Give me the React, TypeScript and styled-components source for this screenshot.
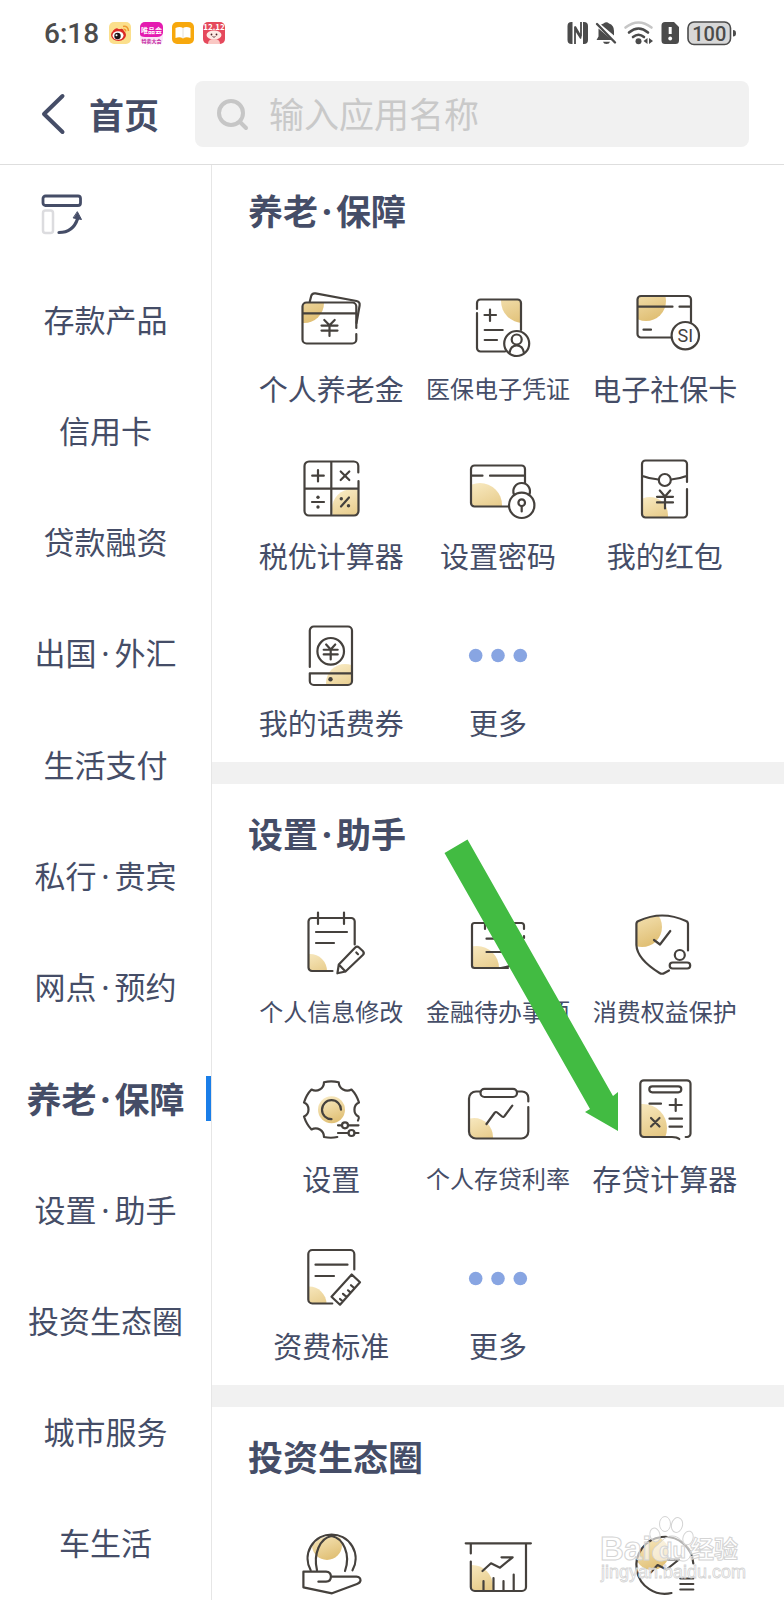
import React from 'react';
import styled, { createGlobalStyle, css } from 'styled-components';

const INK = '#454d67';
const LINE = '#45413d';

const GlobalStyle = createGlobalStyle`
  *, *::before, *::after { box-sizing: border-box; }
  body {
    margin: 0;
    background: #fff;
    color: ${INK};
    font-family: "Noto Sans CJK SC", "Noto Sans", sans-serif;
  }
  button, input { font: inherit; color: inherit; }
  h1, h2, ul, p { margin: 0; padding: 0; }
  svg { overflow: visible; }
`;

const Page = styled.div`
  position: relative;
  display: flex;
  flex-direction: column;
  height: 100vh;
  overflow: hidden;
`;

const StatusBar = styled.div`
  display: flex;
  align-items: center;
  justify-content: space-between;
  height: 66px;
  padding: 0 47px 0 44px;
`;

const StatusGroup = styled.div<{ $gap: number }>`
  display: flex;
  align-items: center;
  gap: ${(p) => p.$gap}px;
`;

const Clock = styled.time`
  padding-top: 2px;
  font: 500 28px/32px Roboto, sans-serif;
  color: #4c4c4c;
`;

const Header = styled.header`
  display: flex;
  align-items: center;
  height: 99px;
  padding: 0 35px 2px 39px;
  border-bottom: 1px solid #dedede;
`;

const BackButton = styled.button`
  display: flex;
  align-items: center;
  gap: 20px;
  width: 156px;
  padding: 0;
  border: 0;
  background: none;
  font-size: 35px;
  font-weight: 700;
  line-height: 48px;
  text-align: left;
`;

const SearchBox = styled.label`
  flex: 1;
  display: flex;
  align-items: center;
  gap: 18px;
  height: 66px;
  padding: 0 20px;
  border-radius: 8px;
  background: #f1f1f1;
`;

const SearchInput = styled.input`
  flex: 1;
  min-width: 0;
  padding: 0 0 2px;
  border: 0;
  outline: 0;
  background: none;
  font-size: 35px;
  line-height: 48px;
  &::placeholder { color: #c9c9c9; opacity: 1; }
`;

const Body = styled.div`
  flex: 1;
  display: flex;
  min-height: 0;
`;

const Sidebar = styled.nav`
  flex: none;
  display: flex;
  flex-direction: column;
  width: 212px;
  border-right: 1px solid #e6e6e6;
`;

const LayoutToggle = styled.button`
  flex: none;
  display: flex;
  align-items: center;
  height: 100px;
  padding: 0 0 2px 40px;
  border: 0;
  background: none;
`;

const NavList = styled.ul`
  flex: 1;
  display: flex;
  flex-direction: column;
  list-style: none;
`;

const NavItem = styled.li`
  flex: 1;
  display: flex;
`;

const NavLink = styled.a<{ $active?: boolean }>`
  position: relative;
  flex: 1;
  display: flex;
  align-items: center;
  justify-content: center;
  padding-bottom: 4px;
  color: inherit;
  text-decoration: none;
  white-space: nowrap;
  font-size: 31px;
  line-height: 44px;
  ${(p) =>
    p.$active &&
    css`
      padding-bottom: 2px;
      font-size: 35px;
      font-weight: 700;
      &::after {
        content: '';
        position: absolute;
        right: 0;
        width: 5px;
        height: 45px;
        background: #1a7ee8;
      }
    `}
`;

const Dot = styled.span`
  display: inline-block;
  width: 18px;
  font-family: "Noto Sans", sans-serif;
  line-height: 1;
  text-align: center;
`;

const Main = styled.main`
  position: relative;
  flex: 1;
  min-width: 0;
`;

const Section = styled.section`
  padding: 25px 36px 22px;
  &:first-child { padding-top: 21px; }
  & + & { border-top: 22px solid #f1f1f1; }
`;

const SectionTitle = styled.h2`
  margin-bottom: 50px;
  font-size: 35px;
  font-weight: 700;
  line-height: 48px;
`;

const AppGrid = styled.ul`
  display: grid;
  grid-template-columns: repeat(3, 1fr);
  row-gap: 45px;
  list-style: none;
`;

const AppLink = styled.a`
  display: flex;
  flex-direction: column;
  align-items: center;
  gap: 14px;
  color: inherit;
  text-decoration: none;
`;

const AppLabel = styled.span<{ $long: boolean }>`
  font-size: ${(p) => (p.$long ? 24 : 29)}px;
  line-height: 36px;
  white-space: nowrap;
`;

const Pointer = styled.svg`
  position: absolute;
  top: 674px;
  left: 232px;
  pointer-events: none;
`;

const Watermark = styled.svg`
  position: absolute;
  right: 34px;
  bottom: 8px;
  pointer-events: none;
`;

/* ---------- app icons, all drawn on a 72 x 72 board ---------- */

function Board({ id, clip, glow, children }: {
  id: string;
  clip?: React.ReactNode;
  glow?: [number, number, number];
  children: React.ReactNode;
}) {
  return (
    <svg width="72" height="72" viewBox="0 0 72 72" fill="none" stroke={LINE} strokeWidth="2.2" strokeLinecap="round" strokeLinejoin="round" aria-hidden="true">
      {glow && (
        <>
          <defs>
            <linearGradient id={`g-${id}`} x1="0.2" y1="0" x2="0.6" y2="1">
              <stop offset="0" stopColor="#f9ebc4" />
              <stop offset="1" stopColor="#e0bf74" />
            </linearGradient>
            <clipPath id={`c-${id}`}>{clip}</clipPath>
          </defs>
          <circle cx={glow[0]} cy={glow[1]} r={glow[2]} fill={`url(#g-${id})`} stroke="none" clipPath={`url(#c-${id})`} />
        </>
      )}
      {children}
    </svg>
  );
}

const Yen = ({ x, y, h = 16, w = 8 }: { x: number; y: number; h?: number; w?: number }) => (
  <path d={`M${x - w * 0.65} ${y}L${x} ${y + h * 0.33}L${x + w * 0.65} ${y}M${x} ${y + h * 0.33}V${y + h}M${x - w} ${y + h * 0.35}H${x + w}M${x - w} ${y + h * 0.66}H${x + w}`} />
);

const icons: Record<string, React.ReactNode> = {
  pension: (
    <Board id="pension" glow={[9, 19, 20]} clip={<rect x="8" y="19" width="53" height="40" rx="4" />}>
      <path d="M61.3 44V22.5a4 4 0 0 0-4-4H11.5a4 4 0 0 0-4 4V55.500a4 4 0 0 0 4 4H57.300a4 4 0 0 0 4-4V50M7.500 29.300H61.300" />
      <path d="M14.800 17.500L16.200 12Q17 8.800 20.500 9.400L61.500 17Q65.200 17.800 64.600 21.500L61.500 39" />
      <Yen x={34.500} y={36} />
    </Board>
  ),
  medical: (
    <Board id="medical" glow={[61, 17, 22]} clip={<rect x="15" y="16" width="44" height="51" rx="3" />}>
      <path d="M15 25V19a3.500 3.500 0 0 1 3.500-3.500H55.500a3.500 3.500 0 0 1 3.500 3.500V46M15 29V64a3.500 3.500 0 0 0 3.500 3.500H43" />
      <path d="M28 25.500V37M22.500 31H34M22.700 46H40.700M22.700 56H35" />
      <circle cx="54.700" cy="59.500" r="12.500" />
      <circle cx="54.700" cy="55.500" r="5" />
      <path d="M47.500 69Q48.500 61.500 54.700 61.500T62 69" />
    </Board>
  ),
  social: (
    <Board id="social" glow={[17, 17, 20]} clip={<rect x="9" y="12" width="53" height="41" rx="3" />}>
      <path d="M62 38.500V15.500a3.500 3.500 0 0 0-3.500-3.500H12a3.500 3.500 0 0 0-3.500 3.500V50a3.500 3.500 0 0 0 3.500 3.500H42.500M8.500 22.700H43.500M50.500 22.700H62M14.500 45.700H22" />
      <circle cx="56.300" cy="51.700" r="13.700" />
      <text x="56.300" y="58" textAnchor="middle" fill={LINE} stroke="none" fontFamily="Roboto, sans-serif" fontWeight="400" fontSize="18">SI</text>
    </Board>
  ),
  tax: (
    <Board id="tax" glow={[57, 58, 20]} clip={<rect x="37" y="38" width="26" height="27" rx="2" />}>
      <path d="M63.300 21.500V15a4.500 4.500 0 0 0-4.500-4.500H14a4.500 4.500 0 0 0-4.500 4.500V60a4.500 4.500 0 0 0 4.500 4.500H59a4.500 4.500 0 0 0 4.500-4.500V30M36.300 10.500V64.500M9.500 37.700H63.300" />
      <path d="M23 19V30.500M17.200 24.700H28.800M45.700 20.500L54.300 29M54.300 20.500L45.700 29M17 51H29M46 55.500L54 46.500" />
      <g fill={LINE} stroke="none">
        <circle cx="23" cy="46.300" r="1.700" /><circle cx="23" cy="56" r="1.700" />
        <circle cx="46.300" cy="47.700" r="1.700" /><circle cx="53.500" cy="54.700" r="1.700" />
      </g>
    </Board>
  ),
  password: (
    <Board id="password" glow={[18, 54, 22]} clip={<rect x="10" y="15" width="52" height="40" rx="3" />}>
      <path d="M63 32V18a3.500 3.500 0 0 0-3.500-3.500H12.500A3.500 3.500 0 0 0 9 18V52a3.500 3.500 0 0 0 3.500 3.500H46.500M9 24.700H20.500M28 24.700H63" />
      <circle cx="59.700" cy="54.300" r="12.700" />
      <path d="M52 43.500A8.300 8.300 0 1 1 67.300 43.500" />
      <circle cx="59.700" cy="51.700" r="3.300" />
      <path d="M59.700 55V60.500" />
    </Board>
  ),
  packet: (
    <Board id="packet" glow={[21, 64, 18]} clip={<rect x="14" y="10" width="44" height="56" rx="3" />}>
      <path d="M58 31V13a3.500 3.500 0 0 0-3.500-3.500H16.500A3.500 3.500 0 0 0 13 13V63a3.500 3.500 0 0 0 3.500 3.500H54.500A3.500 3.500 0 0 0 58 63V38M13.500 25Q21 28 29.500 28.500M42 28.500Q50 28 57.500 25" />
      <circle cx="35.800" cy="29" r="6" />
      <Yen x={36} y={39.500} h={18} />
    </Board>
  ),
  phone: (
    <Board id="phone" glow={[50, 65, 19]} clip={<rect x="15" y="9" width="42" height="58" rx="3" />}>
      <path d="M14.800 49V12.500a4 4 0 0 1 4-4H53a4 4 0 0 1 4 4V63a4 4 0 0 1-4 4H18.800a4 4 0 0 1-4-4V55.300H57" />
      <circle cx="35.700" cy="33.300" r="13.300" />
      <Yen x={35.700} y={26.500} h={15} w={7} />
      <circle cx="35.500" cy="61.300" r="2.200" fill={LINE} stroke="none" />
    </Board>
  ),
  more: (
    <svg width="72" height="72" viewBox="0 0 72 72" fill="#88a5e2" aria-hidden="true">
      <circle cx="13.700" cy="37.500" r="6.800" /><circle cx="36" cy="37.500" r="6.800" /><circle cx="58.300" cy="37.500" r="6.800" />
    </svg>
  ),
  profile: (
    <Board id="profile" glow={[15, 64, 17]} clip={<rect x="14" y="12" width="45" height="52" rx="3" />}>
      <path d="M59.700 37.500V14.500a3.500 3.500 0 0 0-3.500-3.500H17a3.500 3.500 0 0 0-3.500 3.500V60.500A3.500 3.500 0 0 0 17 64H37.500M23 5.500V17M49 5.500V17M21 25H52M21 36H39" />
      <path d="M42.400 66.300L43.800 57.500L60 40.700Q62 38.700 64 40.500L67.800 44Q69.800 46 67.800 48L50.500 64.500ZM43.800 57.500L50.500 64.500M61.300 45.500L63 47.200" />
    </Board>
  ),
  todo: (
    <Board id="todo" glow={[15, 61, 22]} clip={<rect x="11" y="17" width="50" height="44" rx="3" />}>
      <path d="M62 22V18.500a2.500 2.500 0 0 0-2.500-2.500H12.500A2.500 2.500 0 0 0 10 18.500V58.500A2.500 2.500 0 0 0 12.500 61H46M62 29V31M23 16V22M49 16V22M24.500 31.700H48M24.500 45H42M39 61Q48 59 54 57" />
    </Board>
  ),
  rights: (
    <Board id="rights" glow={[13, 20, 20]} clip={<path d="M7.400 14.700Q33 2 59 14.700V44L33 67L7.400 44Z" />}>
      <path d="M59 43.500V17Q59 14.700 57 14Q33 3 9.500 14Q7.400 14.700 7.400 17V38Q8 52 30.500 66Q33 67.500 35.500 66L40 63.500M25 33L31 37.500L41.300 24" />
      <circle cx="50.800" cy="48" r="5" />
      <rect x="40.700" y="55.500" width="20.500" height="6" rx="3" />
    </Board>
  ),
  settings: (
    <Board id="settings" glow={[36.500, 35.700, 13.500]} clip={<rect width="72" height="72" />}>
      <path d="M63 46.500Q64.500 44 63.500 42.500C58 40 58 31 64 28.500Q61.500 20.500 56.500 15.500C51 18.500 44 15 43.700 8.300Q36 6.500 29 8.300C29 15 22 18.500 16.500 15.500Q11.500 20.500 9 28.500C15 31 15 40 9 42.500Q11.500 50.500 16.500 55.500C22 52.500 29 56 29 63Q36 64.500 42.300 63" />
      <path d="M46 35.700A9.500 9.500 0 1 0 36.500 45.200M43 51.300H47M53 51.300H63.500M43 59H53.500M59.500 59H63.500" />
      <circle cx="50" cy="51.300" r="3" /><circle cx="56.500" cy="59" r="3" />
    </Board>
  ),
  rates: (
    <Board id="rates" glow={[12, 63, 19]} clip={<rect x="8" y="18" width="57" height="46" rx="6" />}>
      <path d="M18.500 17.500H14a7 7 0 0 0-7 7V57.500a7 7 0 0 0 7 7H59.300a7 7 0 0 0 7-7V33M55 17.500H60a6.300 6.300 0 0 1 6.300 6.300V27.500M24.500 50L32.500 39Q33.700 37.300 35.200 38.500L40 42.500Q41.500 43.700 42.600 42L50.300 31.700" />
      <rect x="18.500" y="14.800" width="36.500" height="8.200" rx="4" />
    </Board>
  ),
  calculator: (
    <Board id="calculator" glow={[14, 54, 24]} clip={<rect x="12" y="7" width="49" height="56" rx="3" />}>
      <path d="M56.700 63H58a3.500 3.500 0 0 0 3.500-3.500V9.800A3.500 3.500 0 0 0 58 6.300H14.800a3.500 3.500 0 0 0-3.500 3.500V59.500a3.500 3.500 0 0 0 3.500 3.500H43Q48 63 50.300 65" />
      <rect x="20.300" y="12.300" width="32" height="6" rx="3" />
      <path d="M20.500 29.700H32M46.700 25V37M40.700 31H52.700M40.500 44.700H53M40.500 52.700H53M22 44L30.500 52.500M30.500 44L22 52.500" />
    </Board>
  ),
  tariff: (
    <Board id="tariff" glow={[14, 63, 17.500]} clip={<rect x="14" y="10" width="45" height="53" rx="3" />}>
      <path d="M59.300 28.500V13A4 4 0 0 0 55.300 9H17.300a4 4 0 0 0-4 4V58.500a4 4 0 0 0 4 4H37.300M20.500 23.700H52.500M20.500 35H39" />
      <path d="M56.700 33.500L65 41.300L45 63.700L36.500 55.800ZM59.500 47.300L56 44.200M55.600 51.600L53 49.300M51.700 56L48 52.800M47.800 60.300L45 58" />
    </Board>
  ),
  globe: (
    <Board id="globe" glow={[32, 15, 15]} clip={<circle cx="36.500" cy="30" r="24" />}>
      <path d="M15.700 40.300A24 24 0 1 1 57.500 40.300M22 40.300C18 24 25 8 36.500 6C48 8 56 24 50 41" />
      <path d="M31 51.700H23.400M8.400 41.700H31Q35.900 42 35.900 46.700T31 51.700M35.900 46.700H61.500Q65.500 47 65.500 50.500Q65 53 62 54L37 63.300L8.400 57.300V41.700" />
    </Board>
  ),
  board: (
    <Board id="board" glow={[10, 56, 21]} clip={<rect x="9" y="14" width="55" height="46" rx="3" />}>
      <path d="M3.700 13.300H68.900M8.800 13.300V23.500M8.800 31.500V57a4 4 0 0 0 4 4H60a4 4 0 0 0 4-4V13.300M21.500 51V60.500M31.500 48V60.500M41.500 51V60.500M51.700 44.500V60.500" />
      <path d="M20.500 41L29 33.300L38 37.700L50.600 27.300H39.500" />
    </Board>
  ),
  fund: (
    <Board id="fund" glow={[23, 23, 17]} clip={<circle cx="36" cy="35" r="28.500" />}>
      <path d="M64.300 33.500A28.500 28.500 0 1 0 42.500 63M21.700 42.500L28.600 35L37.500 39.500L50 29.500H39M51.300 48.500H64.300M51.300 54H64.300M51.300 59.500H64.300" />
    </Board>
  ),
};

/* ---------- data ---------- */

type AppEntry = { icon: string; label?: string };
const sections: { title: string; apps: AppEntry[] }[] = [
  {
    title: '养老·保障',
    apps: [
      { icon: 'pension', label: '个人养老金' },
      { icon: 'medical', label: '医保电子凭证' },
      { icon: 'social', label: '电子社保卡' },
      { icon: 'tax', label: '税优计算器' },
      { icon: 'password', label: '设置密码' },
      { icon: 'packet', label: '我的红包' },
      { icon: 'phone', label: '我的话费券' },
      { icon: 'more', label: '更多' },
    ],
  },
  {
    title: '设置·助手',
    apps: [
      { icon: 'profile', label: '个人信息修改' },
      { icon: 'todo', label: '金融待办事项' },
      { icon: 'rights', label: '消费权益保护' },
      { icon: 'settings', label: '设置' },
      { icon: 'rates', label: '个人存贷利率' },
      { icon: 'calculator', label: '存贷计算器' },
      { icon: 'tariff', label: '资费标准' },
      { icon: 'more', label: '更多' },
    ],
  },
  { title: '投资生态圈', apps: [{ icon: 'globe' }, { icon: 'board' }, { icon: 'fund' }] },
];

const navItems = [
  '存款产品', '信用卡', '贷款融资', '出国·外汇', '生活支付', '私行·贵宾',
  '网点·预约', '养老·保障', '设置·助手', '投资生态圈', '城市服务', '车生活',
];
const activeItem = '养老·保障';

function Dotted({ text }: { text: string }) {
  const [head, tail] = text.split('·');
  return (
    <span>
      {head}
      {tail && <><Dot>·</Dot>{tail}</>}
    </span>
  );
}

/* ---------- status bar drawings ---------- */

const AppBadges = () => (
  <svg width="117" height="22" viewBox="0 0 117 22" aria-hidden="true">
    <rect width="22" height="22" rx="5" fill="#fbdf8c" />
    <ellipse cx="9.500" cy="13" rx="7.500" ry="6" fill="#dc2a26" />
    <path d="M4 9Q7 4.500 10 7.500Q14 5.500 14.500 8.500L15 11Z" fill="#dc2a26" />
    <ellipse cx="9" cy="13.500" rx="5.500" ry="4.200" fill="#fff" />
    <circle cx="8.500" cy="14" r="3.200" fill="#1d1517" />
    <circle cx="7.500" cy="13.300" r="1" fill="#fff" />
    <path d="M14 4.500Q19 3.500 19.500 9M14.500 7.300Q16.500 7 16.800 9.300" fill="none" stroke="#ee9930" strokeWidth="1.500" />
    <rect x="31" width="23" height="22" rx="5" fill="#fbe6f8" />
    <path d="M31 5a5 5 0 0 1 5-5H49a5 5 0 0 1 5 5V11Q53 15 48 15H36Q31 15 31 12Z" fill="#e41bb0" />
    <text x="42.500" y="11" textAnchor="middle" fontSize="7" fontWeight="700" fill="#fff">唯品会</text>
    <text x="42.500" y="20.500" textAnchor="middle" fontSize="5" fontWeight="700" fill="#c3289f">特卖大会</text>
    <rect x="63" width="22" height="22" rx="5" fill="#f7a80d" />
    <path d="M66.500 6Q71 4 74 6Q77 4 81.500 6V16Q77 14.500 74 16.500Q71 14.500 66.500 16Z" fill="#fff" />
    <path d="M74 6V16" stroke="#e3e0d8" strokeWidth="1" />
    <rect x="94" width="22" height="22" rx="5" fill="#e5495c" />
    <text x="105" y="8" textAnchor="middle" fontSize="8" fontWeight="700" fill="#fff">12.12</text>
    <ellipse cx="105" cy="13" rx="7.500" ry="4.500" fill="#fde9e4" />
    <path d="M99 22Q99 17 105 17T111 22Z" fill="#fac8c4" />
    <circle cx="102.500" cy="12.500" r="0.900" fill="#4a2025" /><circle cx="107.500" cy="12.500" r="0.900" fill="#4a2025" />
    <path d="M103.500 14.500Q105 16 106.500 14.500" stroke="#4a2025" strokeWidth="0.800" fill="none" />
  </svg>
);

const SystemIcons = () => (
  <svg width="170" height="26" viewBox="0 0 170 26" fill="#4b4b4b" aria-hidden="true">
    <path d="M4.500 2H5.500V24H4.500A4 4 0 0 1 .5 20V6A4 4 0 0 1 4.500 2ZM17 2H16V24H17A4 4 0 0 0 21 20V6A4 4 0 0 0 17 2Z" />
    <path d="M8 24V9L14 18.500M8 6.500L14 17M14 2V16.500" fill="none" stroke="#4b4b4b" strokeWidth="1.800" />
    <path d="M34 4.500Q35.500 4 36.500 3.500Q39.500 1 42 3.500Q47 5 47 11V15.500ZM31.500 8.500L45 20H29.500L31.500 16.500ZM36 21.700H43Q42.500 24 39.500 24T36 21.700Z" />
    <path d="M30 4L48 22.500" stroke="#4b4b4b" strokeWidth="2.400" strokeLinecap="round" />
    <g fill="none" strokeWidth="2.600" strokeLinecap="round">
      <path d="M58.500 7.500Q71.500-2.500 84.500 7.500" stroke="#c6c6c6" />
      <path d="M62 12.500Q71.500 4.500 81 12.500M66 17Q71.500 12.500 77 17" stroke="#4b4b4b" />
    </g>
    <circle cx="71.500" cy="21.200" r="3" />
    <path d="M80.500 18V24L76.500 21ZM82 18V24L86 21Z" />
    <path d="M98 2H107L112 7V20.500A3.500 3.500 0 0 1 108.500 24H98A3.500 3.500 0 0 1 94.500 20.500V5.500A3.500 3.500 0 0 1 98 2Z" />
    <path d="M103.200 7V14" stroke="#fff" strokeWidth="3" />
    <circle cx="103.200" cy="18.500" r="1.900" fill="#fff" />
    <rect x="121" y="2" width="42.500" height="22.500" rx="6" fill="#d8d8d8" stroke="#4b4b4b" strokeWidth="1.600" />
    <path d="M166 10Q169 10 169 13.300T166 16.500Z" />
    <text x="142.200" y="20.500" textAnchor="middle" fontFamily="Roboto, sans-serif" fontWeight="500" fontSize="20">100</text>
  </svg>
);

export default function App() {
  return (
    <Page>
      <GlobalStyle />
      <StatusBar>
        <StatusGroup $gap={10}>
          <Clock>6:18</Clock>
          <AppBadges />
        </StatusGroup>
        <SystemIcons />
      </StatusBar>

      <Header>
        <BackButton type="button">
          <svg width="30" height="42" viewBox="0 0 30 42" fill="none" stroke={INK} strokeWidth="4" strokeLinecap="round" strokeLinejoin="round" aria-hidden="true">
            <path d="M23.500 3L5 21L23.500 39" />
          </svg>
          首页
        </BackButton>
        <SearchBox>
          <svg width="36" height="36" viewBox="0 0 36 36" fill="none" stroke="#c6c6c6" strokeWidth="4" strokeLinecap="round" aria-hidden="true">
            <circle cx="16" cy="17" r="12" />
            <path d="M25 26L31 32" />
          </svg>
          <SearchInput type="text" placeholder="输入应用名称" aria-label="输入应用名称" />
        </SearchBox>
      </Header>

      <Body>
        <Sidebar>
          <LayoutToggle type="button" aria-label="切换布局">
            <svg width="44" height="42" viewBox="0 0 44 42" fill="none" strokeLinecap="round" strokeLinejoin="round" aria-hidden="true">
              <rect x="3" y="3" width="37.500" height="9.500" rx="2.500" stroke={INK} strokeWidth="2.800" />
              <rect x="3" y="17.500" width="10" height="22.500" rx="2.500" stroke="#dcdcdf" strokeWidth="2.500" />
              <path d="M19 39.500Q33 39.500 37.500 26" stroke={INK} strokeWidth="3.200" />
              <path d="M37.500 19L41.500 26.500L33.500 25Z" fill={INK} stroke={INK} strokeWidth="1" />
            </svg>
          </LayoutToggle>
          <NavList>
            {navItems.map((item) => (
              <NavItem key={item}>
                <NavLink href="#" $active={item === activeItem} aria-current={item === activeItem || undefined}>
                  <Dotted text={item} />
                </NavLink>
              </NavItem>
            ))}
          </NavList>
        </Sidebar>

        <Main>
          {sections.map((section) => (
            <Section key={section.title}>
              <SectionTitle><Dotted text={section.title} /></SectionTitle>
              <AppGrid>
                {section.apps.map((app) => (
                  <li key={app.icon}>
                    <AppLink href="#">
                      {icons[app.icon]}
                      {app.label && <AppLabel $long={app.label.length > 5}>{app.label}</AppLabel>}
                    </AppLink>
                  </li>
                ))}
              </AppGrid>
            </Section>
          ))}
          <Pointer width="176" height="294" viewBox="0 0 176 294" aria-hidden="true">
            <path d="M0.500 14L23.500 0.500L169 257L174 253V292L141 273L146 270Z" fill="#42bb42" />
          </Pointer>
        </Main>
      </Body>

      <Watermark width="150" height="78" viewBox="0 0 150 78" fill="#fff" fillOpacity=".6" stroke="#d4d4d4" strokeWidth="1" aria-hidden="true">
        <ellipse cx="65" cy="10" rx="5.500" ry="7.500" />
        <ellipse cx="77" cy="11" rx="5.500" ry="7.500" transform="rotate(14 77 11)" />
        <ellipse cx="55" cy="21" rx="5" ry="7" transform="rotate(-14 55 21)" />
        <ellipse cx="88" cy="24" rx="5" ry="7" transform="rotate(18 88 24)" />
        <path d="M72 22C80 22 82 29 88 33C94 40 89 48 82 47C75 45 69 45 62 47C54 48 49 40 55 33C61 29 64 22 72 22Z" />
        <g fontFamily="Liberation Sans, Noto Sans CJK SC, sans-serif" fontWeight="700">
          <text x="0" y="46" fontSize="33">Bai</text>
          <text x="59" y="44" fontSize="22">du</text>
          <text x="90" y="44" fontSize="24">经验</text>
        </g>
        <text x="1" y="64" fontSize="18" fontFamily="Liberation Sans, sans-serif" strokeWidth="0.800">jingyan.baidu.com</text>
      </Watermark>
    </Page>
  );
}
